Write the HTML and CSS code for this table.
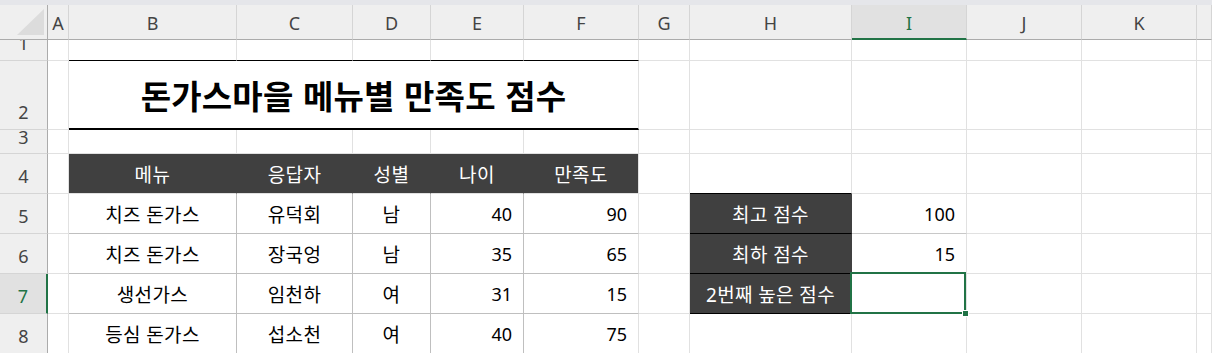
FILE: index.html
```html
<!DOCTYPE html>
<html lang="ko">
<head>
<meta charset="utf-8">
<title>돈가스마을 메뉴별 만족도 점수</title>
<link rel="stylesheet" href="styles.css">
</head>
<body>
<div class="strip"></div>
<div class="sheet">
  <!-- column headers -->
  <div class="corner"><svg width="27" height="26" viewBox="0 0 27 26"><polygon points="27,0 27,26 0,26" fill="#dcdcdc"/></svg></div>
  <div class="ch">A</div>
  <div class="ch">B</div>
  <div class="ch">C</div>
  <div class="ch">D</div>
  <div class="ch">E</div>
  <div class="ch">F</div>
  <div class="ch">G</div>
  <div class="ch">H</div>
  <div class="ch sel">I</div>
  <div class="ch">J</div>
  <div class="ch">K</div>
  <div class="ch last"></div>

  <!-- row 1 -->
  <div class="rh">1</div>
  <div class="cell"></div>
  <div class="cell tline"></div>
  <div class="cell tline"></div>
  <div class="cell tline"></div>
  <div class="cell tline"></div>
  <div class="cell tline"></div>
  <div class="cell"></div>
  <div class="cell"></div>
  <div class="cell"></div>
  <div class="cell"></div>
  <div class="cell"></div>
  <div class="cell"></div>

  <!-- row 2 -->
  <div class="rh">2</div>
  <div class="cell"></div>
  <div class="cell title">돈가스마을 메뉴별 만족도 점수</div>
  <div class="cell"></div>
  <div class="cell"></div>
  <div class="cell"></div>
  <div class="cell"></div>
  <div class="cell"></div>
  <div class="cell"></div>

  <!-- row 3 -->
  <div class="rh short">3</div>
  <div class="cell"></div>
  <div class="cell"></div>
  <div class="cell"></div>
  <div class="cell"></div>
  <div class="cell"></div>
  <div class="cell"></div>
  <div class="cell"></div>
  <div class="cell"></div>
  <div class="cell"></div>
  <div class="cell"></div>
  <div class="cell"></div>
  <div class="cell"></div>

  <!-- row 4 -->
  <div class="rh">4</div>
  <div class="cell"></div>
  <div class="cell hd">메뉴</div>
  <div class="cell hd">응답자</div>
  <div class="cell hd">성별</div>
  <div class="cell hd">나이</div>
  <div class="cell hd end">만족도</div>
  <div class="cell"></div>
  <div class="cell blk-b"></div>
  <div class="cell"></div>
  <div class="cell"></div>
  <div class="cell"></div>
  <div class="cell"></div>

  <!-- row 5 -->
  <div class="rh">5</div>
  <div class="cell"></div>
  <div class="cell tb ko c">치즈 돈가스</div>
  <div class="cell tb ko c">유덕회</div>
  <div class="cell tb ko c">남</div>
  <div class="cell tb r">40</div>
  <div class="cell tb end r">90</div>
  <div class="cell"></div>
  <div class="cell lab ko">최고 점수</div>
  <div class="cell mid r">100</div>
  <div class="cell"></div>
  <div class="cell"></div>
  <div class="cell"></div>

  <!-- row 6 -->
  <div class="rh">6</div>
  <div class="cell"></div>
  <div class="cell tb ko c">치즈 돈가스</div>
  <div class="cell tb ko c">장국엉</div>
  <div class="cell tb ko c">남</div>
  <div class="cell tb r">35</div>
  <div class="cell tb end r">65</div>
  <div class="cell"></div>
  <div class="cell lab ko">최하 점수</div>
  <div class="cell r">15</div>
  <div class="cell"></div>
  <div class="cell"></div>
  <div class="cell"></div>

  <!-- row 7 -->
  <div class="rh sel">7</div>
  <div class="cell"></div>
  <div class="cell tb ko c">생선가스</div>
  <div class="cell tb ko c">임천하</div>
  <div class="cell tb ko c">여</div>
  <div class="cell tb r">31</div>
  <div class="cell tb end r">15</div>
  <div class="cell"></div>
  <div class="cell lab ko">2번째 높은 점수</div>
  <div class="cell active"><span class="handle"></span></div>
  <div class="cell"></div>
  <div class="cell"></div>
  <div class="cell"></div>

  <!-- row 8 -->
  <div class="rh">8</div>
  <div class="cell"></div>
  <div class="cell tb ko c">등심 돈가스</div>
  <div class="cell tb ko c">섭소천</div>
  <div class="cell tb ko c">여</div>
  <div class="cell tb r">40</div>
  <div class="cell tb end r">75</div>
  <div class="cell"></div>
  <div class="cell"></div>
  <div class="cell"></div>
  <div class="cell"></div>
  <div class="cell"></div>
  <div class="cell"></div>
</div>
</body>
</html>
```

FILE: styles.css
```css
* { box-sizing: border-box; }
html, body {
  margin: 0;
  padding: 0;
  width: 1212px;
  height: 353px;
  overflow: hidden;
  background: #ffffff;
  font-family: "Noto Sans", "Noto Sans CJK KR", sans-serif;
}
.strip {
  height: 5px;
  background: #e5e6ea;
}
.sheet {
  display: grid;
  grid-template-columns: 48px 21px 168px 116px 78px 93px 115px 51px 162px 115px 115px 115px 15px;
  grid-template-rows: 35px 21px 69px 24px 40px 40px 40px 40px 40px;
}
.sheet > div {
  border-right: 1px solid #e1e1e1;
  border-bottom: 1px solid #e1e1e1;
  overflow: hidden;
  min-width: 0;
}
.corner {
  background: #efefef;
  display: flex;
  justify-content: flex-end;
  align-items: flex-end;
  padding: 0 3px 4px 0;
  border-right-color: #ababab !important;
  border-bottom-color: #ababab !important;
}
.corner svg { display: block; }
.ch {
  background: #efefef;
  border-right-color: #d5d5d5 !important;
  border-bottom-color: #ababab !important;
  color: #444444;
  font-size: 18px;
  display: flex;
  align-items: center;
  justify-content: center;
  padding-top: 2px;
}
.ch.sel {
  background: #e1e1e1;
  border-bottom: 2px solid #217346 !important;
  color: #217346;
}
.rh {
  background: #efefef;
  border-right-color: #ababab !important;
  border-bottom-color: #d5d5d5 !important;
  color: #444444;
  font-size: 18px;
  line-height: 18px;
  display: flex;
  flex-direction: column;
  justify-content: flex-end;
  align-items: center;
  padding-bottom: 8px;
}
.rh.short {
  line-height: 14px;
  padding-bottom: 9px;
}
.rh.sel {
  background: #e1e1e1;
  border-right: 2px solid #217346 !important;
  color: #217346;
}
.cell {
  font-size: 18px;
  color: #000000;
  display: flex;
  align-items: center;
  white-space: nowrap;
}
.ko {
  font-size: 19px;
  letter-spacing: 0.4px;
}
.c { justify-content: center; }
.r { justify-content: flex-end; padding-right: 11px; }
.tline { border-bottom-color: #000000 !important; }
.title {
  grid-column: span 5;
  justify-content: center;
  font-family: "Noto Sans CJK KR", sans-serif;
  font-weight: 700;
  font-size: 33px;
  letter-spacing: 0.2px;
  border-bottom: 2px solid #000000 !important;
  padding-top: 1px;
}
.hd {
  background: #404040;
  color: #ffffff;
  justify-content: center;
  font-size: 19px;
  letter-spacing: 0.4px;
  border-right-color: #404040 !important;
}
.hd.end { border-right-color: #e1e1e1 !important; }
.tb {
  border-right-color: #bfbfbf !important;
  border-bottom-color: #bfbfbf !important;
}
.tb.end { border-right-color: #e1e1e1 !important; }
.blk-b { border-bottom-color: #000000 !important; }
.lab {
  background: #404040;
  color: #ffffff;
  justify-content: center;
  border-right-color: #404040 !important;
  border-bottom-color: #000000 !important;
}
.mid { border-bottom-color: #c8c8c8 !important; }
.active {
  position: relative;
  overflow: visible !important;
}
.active::after {
  content: "";
  position: absolute;
  left: -2px;
  top: -2px;
  right: 0;
  bottom: -1px;
  border: 2px solid #217346;
}
.handle {
  position: absolute;
  left: 110px;
  top: 36px;
  width: 7px;
  height: 7px;
  background: #217346;
  border: 1px solid #ffffff;
  z-index: 2;
}
```
